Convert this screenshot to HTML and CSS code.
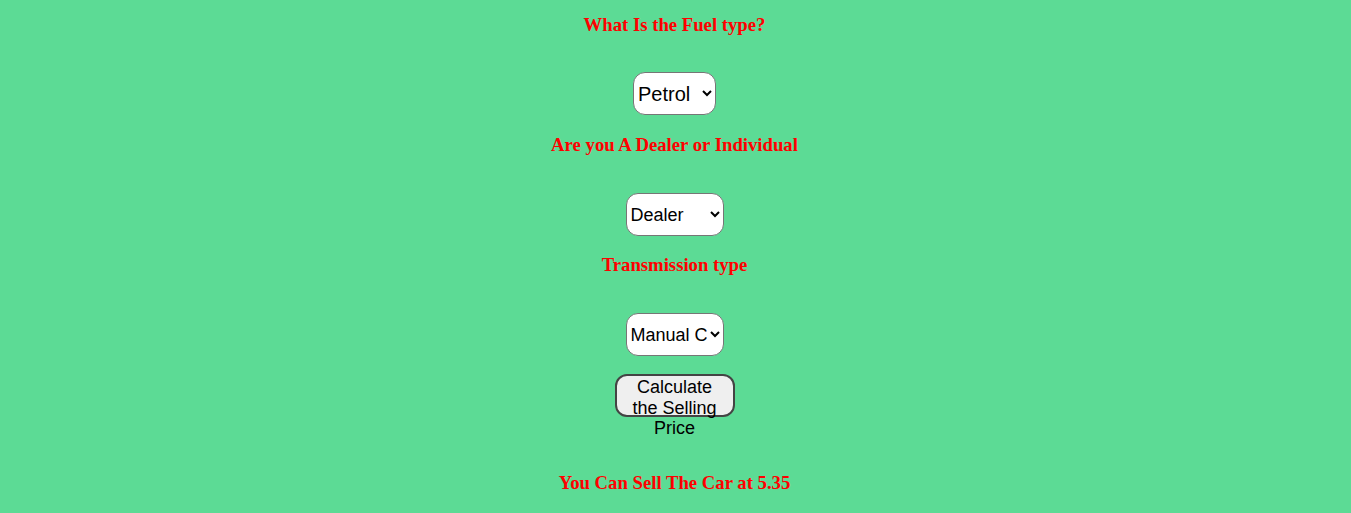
FILE: index.html
```html
<!DOCTYPE html>
<html>
<head>
<meta charset="utf-8">
<link rel="stylesheet" href="styles.css">
</head>
<body>
<form class="form">
  <h3 class="label">What Is the Fuel type?</h3>
  <select class="field field-fuel">
    <option>Petrol</option>
    <option>Diesel</option>
    <option>CNG</option>
  </select>
  <h3 class="label label-gap">Are you A Dealer or Individual</h3>
  <select class="field field-wide">
    <option>Dealer</option>
    <option>Individual</option>
  </select>
  <h3 class="label label-gap-sm">Transmission type</h3>
  <select class="field field-wide">
    <option>Manual Car</option>
    <option>Automatic Car</option>
  </select>
  <button type="button" class="calc">Calculate the Selling Price</button>
  <h3 class="label result">You Can Sell The Car at 5.35</h3>
</form>
</body>
</html>
```
FILE: styles.css
```css
html, body {
  margin: 0;
  padding: 0;
  background: #5cdb95;
}
body {
  padding-top: 14px;
  font-family: "Liberation Sans", Arial, sans-serif;
}
.form {
  display: flex;
  flex-direction: column;
  align-items: center;
  margin-right: 2px;
}
.label {
  margin: 0;
  font-family: "Liberation Serif", "Times New Roman", serif;
  font-weight: bold;
  font-size: 18.72px;
  line-height: 22px;
  color: #ff0000;
}
.label-gap { margin-top: 19px; }
.label-gap-sm { margin-top: 18px; }
.field {
  box-sizing: border-box;
  height: 43px;
  margin-top: 36px;
  border: 1px solid #767676;
  border-radius: 12px;
  background: #ffffff;
  color: #000;
  font-family: "Liberation Sans", Arial, sans-serif;
  padding: 0;
}
.field-fuel {
  width: 83px;
  font-size: 20px;
}
.field-wide {
  width: 98px;
  font-size: 18px;
  margin-top: 37px;
}
.calc {
  box-sizing: border-box;
  width: 120px;
  height: 43px;
  margin-top: 18px;
  padding: 1px 6px;
  border: 2px solid #444;
  border-radius: 12px;
  background: #efefef;
  color: #000;
  font-family: "Liberation Sans", Arial, sans-serif;
  font-size: 18px;
  line-height: 20.7px;
  display: block;
  text-align: center;
}
.result { margin-top: 55px; }
```
